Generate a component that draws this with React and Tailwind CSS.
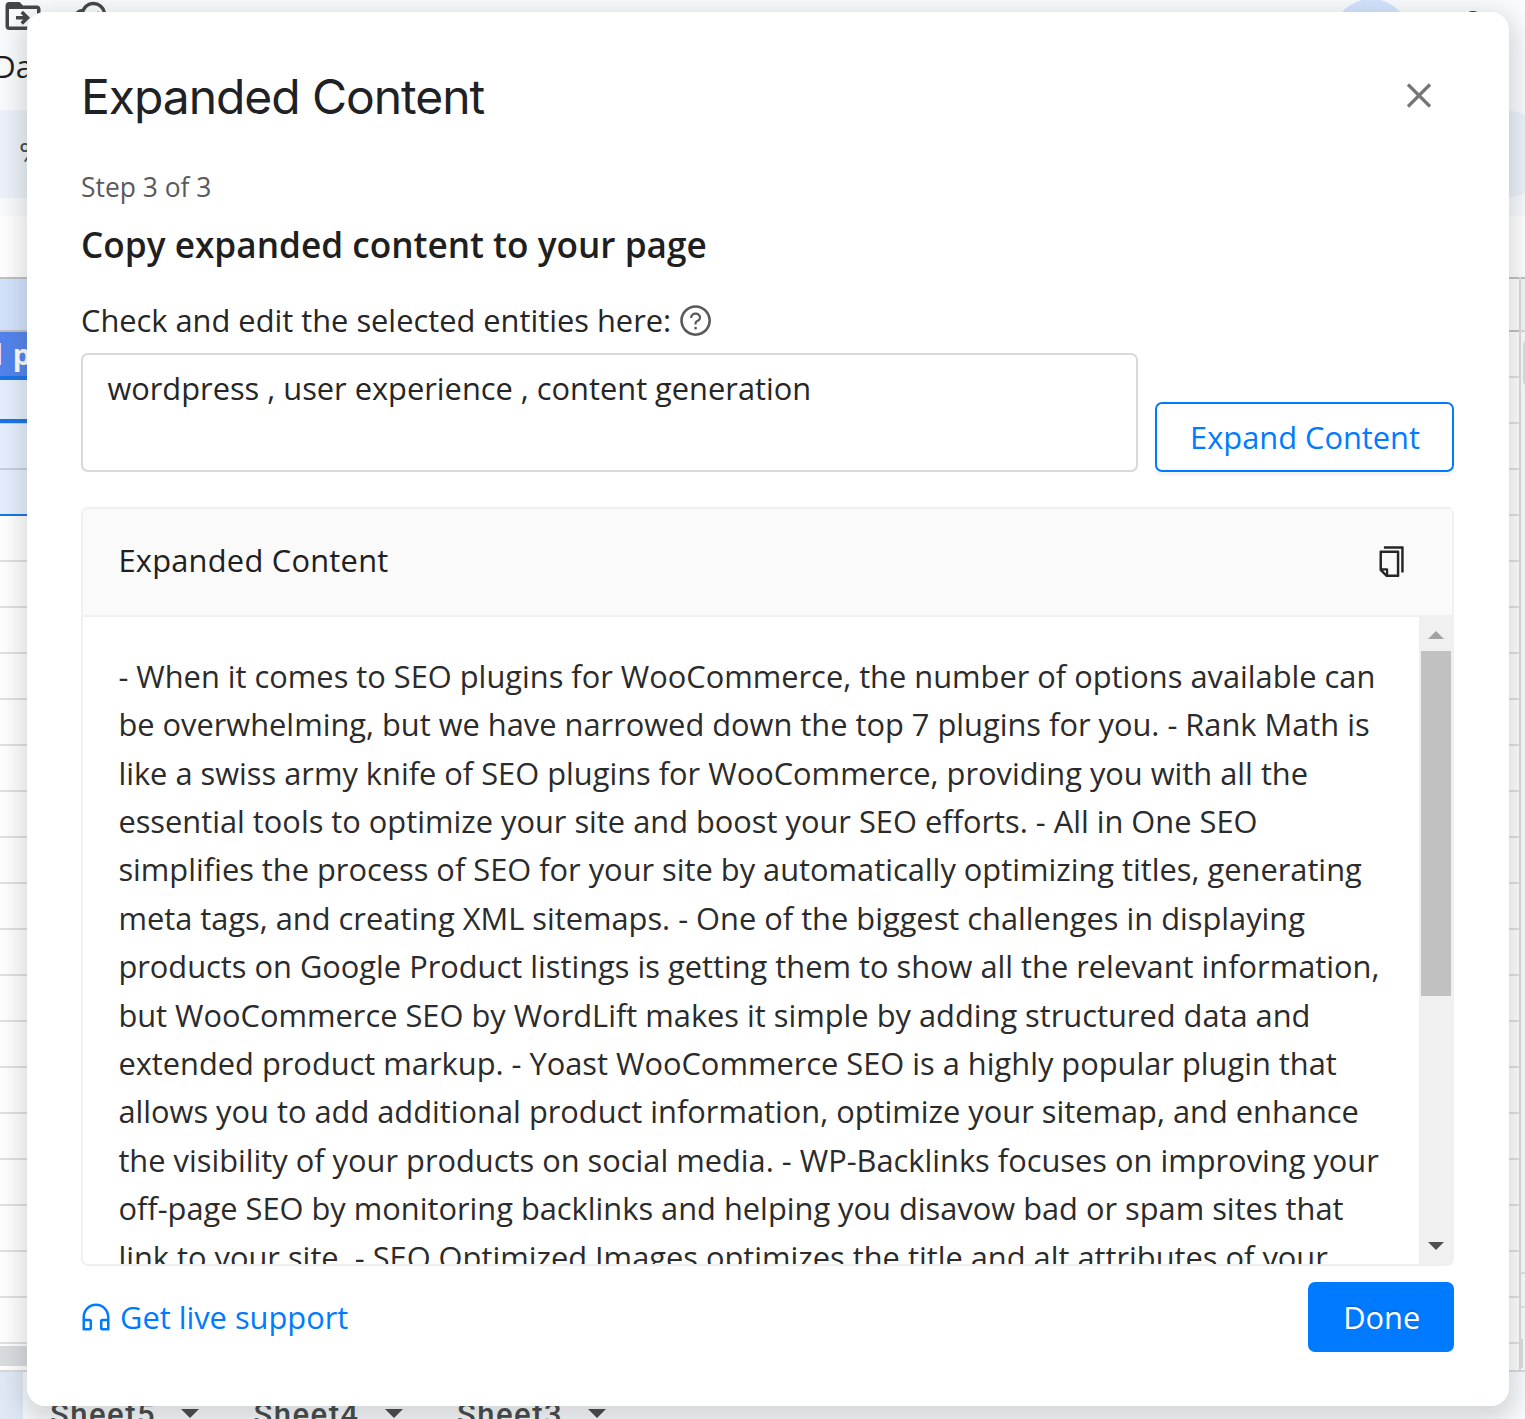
import { AiOutlineCopy, AiOutlineCustomerService, AiOutlineQuestionCircle } from "react-icons/ai";
import { MdDriveFileMoveOutline, MdOutlineCloudDone } from "react-icons/md";

const lines = [
  "- When it comes to SEO plugins for WooCommerce, the number of options available can",
  "be overwhelming, but we have narrowed down the top 7 plugins for you. - Rank Math is",
  "like a swiss army knife of SEO plugins for WooCommerce, providing you with all the",
  "essential tools to optimize your site and boost your SEO efforts. - All in One SEO",
  "simplifies the process of SEO for your site by automatically optimizing titles, generating",
  "meta tags, and creating XML sitemaps. - One of the biggest challenges in displaying",
  "products on Google Product listings is getting them to show all the relevant information,",
  "but WooCommerce SEO by WordLift makes it simple by adding structured data and",
  "extended product markup. - Yoast WooCommerce SEO is a highly popular plugin that",
  "allows you to add additional product information, optimize your sitemap, and enhance",
  "the visibility of your products on social media. - WP-Backlinks focuses on improving your",
  "off-page SEO by monitoring backlinks and helping you disavow bad or spam sites that",
  "link to your site. - SEO Optimized Images optimizes the title and alt attributes of your",
];

const tabs = ["Sheet5", "Sheet4", "Sheet3"];

function AppHeader() {
  return (
    <>
      <div className="relative h-[50px] shrink-0">
        <MdDriveFileMoveOutline className="absolute left-[2px] top-[-5px] size-[42px] text-[#444746]" />
        <MdOutlineCloudDone className="absolute left-[73px] top-[-5px] size-[41px] text-[#444746]" />
        <div className="absolute left-[1332px] top-[-1px] size-[78px] rounded-full bg-[#d3e3fd]" />
        <div className="absolute left-[1461px] top-[10.5px] size-[24px] rounded-full bg-[#303232]" />
      </div>
      <div className="flex h-[60px] shrink-0 items-start">
        <span className="-ml-[6.5px] -mt-px text-[30.5px] leading-[34px] text-[#1f1f1f]">Da</span>
      </div>
      <div className="flex h-[88px] w-[1548px] shrink-0 items-center rounded-r-full bg-[#edf2fa] pl-[19px]">
        <span className="-mt-px font-['Roboto',sans-serif] text-[30px] leading-[32px] text-[#444746]">%</span>
      </div>
      <div className="h-[18px] shrink-0" />
    </>
  );
}

function Sheet() {
  return (
    <div className="flex h-[1093px] shrink-0 bg-white">
      <div className="relative flex w-[1519px] flex-col overflow-hidden">
        <div className="h-[55px] shrink-0 border-y-2 border-[#c0c0c0] bg-white" />
        <div className="flex flex-col">
          {Array.from({ length: 22 }, (_, i) => (
            <div key={i} className="h-[46px] shrink-0 border-b-2 border-[#e1e1e1]" />
          ))}
        </div>
        {/* selected range in the first visible column */}
        <div className="absolute left-0 top-0 flex w-[60px] flex-col">
          <div className="h-[55px] border-y-2 border-[#c0c0c0] bg-[#d3e3fd]" />
          <div className="flex h-[48px] items-start gap-[10px] border-b-4 border-[#1a73e8] bg-[#5383ec] pt-[3px] text-[29px] font-bold leading-[38px] text-white">
            <span className="-ml-[6px]">l</span>
            <span>p</span>
          </div>
          <div className="h-[43px] border-b-4 border-[#1a73e8] bg-[#e6effd]" />
          <div className="h-[47px] border-b-2 border-t border-[#c6d0de] bg-[#e6effd]" />
          <div className="h-[46px] border-b-2 border-[#1a73e8] bg-[#e6effd]" />
        </div>
        <div className="mt-[2px] h-[20px] w-[700px] shrink-0 bg-[#dadce0]" />
      </div>
      <div className="flex w-[6px] flex-col border-l-2 border-[#dcdcdc] bg-[#fbfbfb]">
        <div className="h-[55px] border-y-2 border-b-[#d9d9d9] border-t-[#c0c0c0] bg-[#f5f5f5]" />
        <div className="ml-[2px] mt-[6px] h-[50px] w-[16px] rounded-full bg-[#dadce0]" />
        <div className="mt-[884px] h-[36px] border-y-2 border-[#e1e1e1]" />
        <div className="mt-[31px] h-[29px] w-[2px] bg-[#dcdcdc]" />
      </div>
    </div>
  );
}

function TabBar() {
  return (
    <div className="flex h-[49px] shrink-0 items-start overflow-hidden border-t-2 border-[#d9dbdb]">
      <div className="h-full w-[23px] bg-[#e1e9f7]" />
      {tabs.map((t) => (
        <div key={t} className="flex w-[203.5px] items-center pl-[27px] pt-[25px]">
          <span className="w-[131px] font-['Roboto',sans-serif] text-[31px] font-medium leading-[36px] tracking-[1.5px] text-[#444746]">
            {t}
          </span>
          <svg className="-mt-[4px] h-[9px] w-[18px] shrink-0 fill-[#444746]" viewBox="0 0 18 9">
            <path d="M0 0h18L9 9z" />
          </svg>
        </div>
      ))}
    </div>
  );
}

function ContentPanel() {
  return (
    <section className="mt-[35px] flex h-[759px] flex-col overflow-hidden rounded-[7px] border-2 border-r-0 border-[#f0f0f0]">
      <header className="flex h-[108px] shrink-0 items-center justify-between border-b-2 border-r-2 border-[#f0f0f0] bg-[#fafafa] pl-[35.4px] pr-[43px]">
        <h3 className="-mt-[4px] text-[30.8px] font-medium leading-[48px] tracking-[0.26px] text-[#202020]">Expanded Content</h3>
        <AiOutlineCopy className="size-[35.2px] text-[#262626]" />
      </header>
      <div className="flex min-h-0 flex-1">
        <div className="flex-1 overflow-hidden whitespace-nowrap pl-[35.4px] pt-[34.7px] text-[30.8px] leading-[48.4px] text-[#2b2b2b]">
          {lines.map((l) => (
            <p key={l}>{l}</p>
          ))}
        </div>
        <div className="flex w-[35px] shrink-0 flex-col items-center bg-[#f0f0f0] pr-px">
          <svg className="mt-[14px] h-[8px] w-[16px] fill-[#a3a3a3]" viewBox="0 0 16 8">
            <path d="M8 0l8 8H0z" />
          </svg>
          <div className="mt-[12px] h-[345px] w-[30px] bg-[#c1c1c1]" />
          <svg className="mb-[14px] mt-auto h-[8px] w-[16px] fill-[#505050]" viewBox="0 0 16 8">
            <path d="M0 0h16L8 8z" />
          </svg>
        </div>
      </div>
    </section>
  );
}

function Dialog() {
  return (
    <div className="absolute left-[27px] top-[12px] flex h-[1394px] w-[1482px] flex-col rounded-[18px] bg-white pl-[54px] pr-[55px] pt-[57px] shadow-[0_9px_26px_6px_rgba(60,70,70,0.2)]">
      <div className="flex items-start justify-between">
        <h1 className="font-['Inter',sans-serif] text-[48px] leading-[56px] tracking-[-1.05px] text-[#202124]">
          Expanded Content
        </h1>
        <svg className="mr-[22px] mt-[13px] size-[26px]" viewBox="0 0 26 26" fill="none" stroke="#767676" strokeWidth="3.2">
          <path d="M2 2.5l22 22M24 2.5l-22 22" />
        </svg>
      </div>
      <p className="mt-[43.5px] text-[26.4px] leading-[36px] text-[#5a5a5a]">Step 3 of 3</p>
      <h2 className="mt-[15px] text-[35.2px] font-semibold leading-[48px] text-[#1f1f1f]">
        Copy expanded content to your page
      </h2>
      <div className="mt-[28.5px] flex h-[48px] items-center gap-[6.5px] text-[30.8px] leading-[48px] text-[#262626]">
        <span>Check and edit the selected entities here:</span>
        <AiOutlineQuestionCircle className="mt-[2px] size-[35.2px] text-[#595959]" />
      </div>
      <div className="mt-[9px] flex items-end justify-between">
        <div className="h-[119px] w-[1057px] rounded-[7px] border-2 border-[#d9d9d9] pl-[24.4px] pt-[9px] text-[30.8px] leading-[48px] text-[#262626]">
          wordpress , user experience , content generation
        </div>
        <button className="h-[70px] w-[299px] rounded-[7px] border-2 border-[#007bff] pl-px text-[30.8px] leading-[48px] text-[#007bff] shadow-[0_4px_0_rgba(0,0,0,0.04)]">
          Expand Content
        </button>
      </div>
      <ContentPanel />
      <div className="mt-[16px] flex items-center justify-between text-[30.8px] leading-[48px]">
        <a className="flex items-center gap-[6px] text-[#007bff]">
          <AiOutlineCustomerService className="-ml-[3px] size-[36px]" />
          <span>Get live support</span>
        </a>
        <button className="h-[70px] w-[146px] rounded-[7px] bg-[#007bff] pl-[1.5px] text-white [text-shadow:0_-2px_0_rgba(0,0,0,0.12)]">
          Done
        </button>
      </div>
    </div>
  );
}

export default function App() {
  return (
    <div className="relative h-[1419px] w-[1525px] overflow-hidden bg-[#f9fbfd] font-['Open_Sans',sans-serif]">
      <div className="flex h-full flex-col">
        <AppHeader />
        <div className="h-[61px] shrink-0 bg-white" />
        <Sheet />
        <TabBar />
      </div>
      <Dialog />
    </div>
  );
}
